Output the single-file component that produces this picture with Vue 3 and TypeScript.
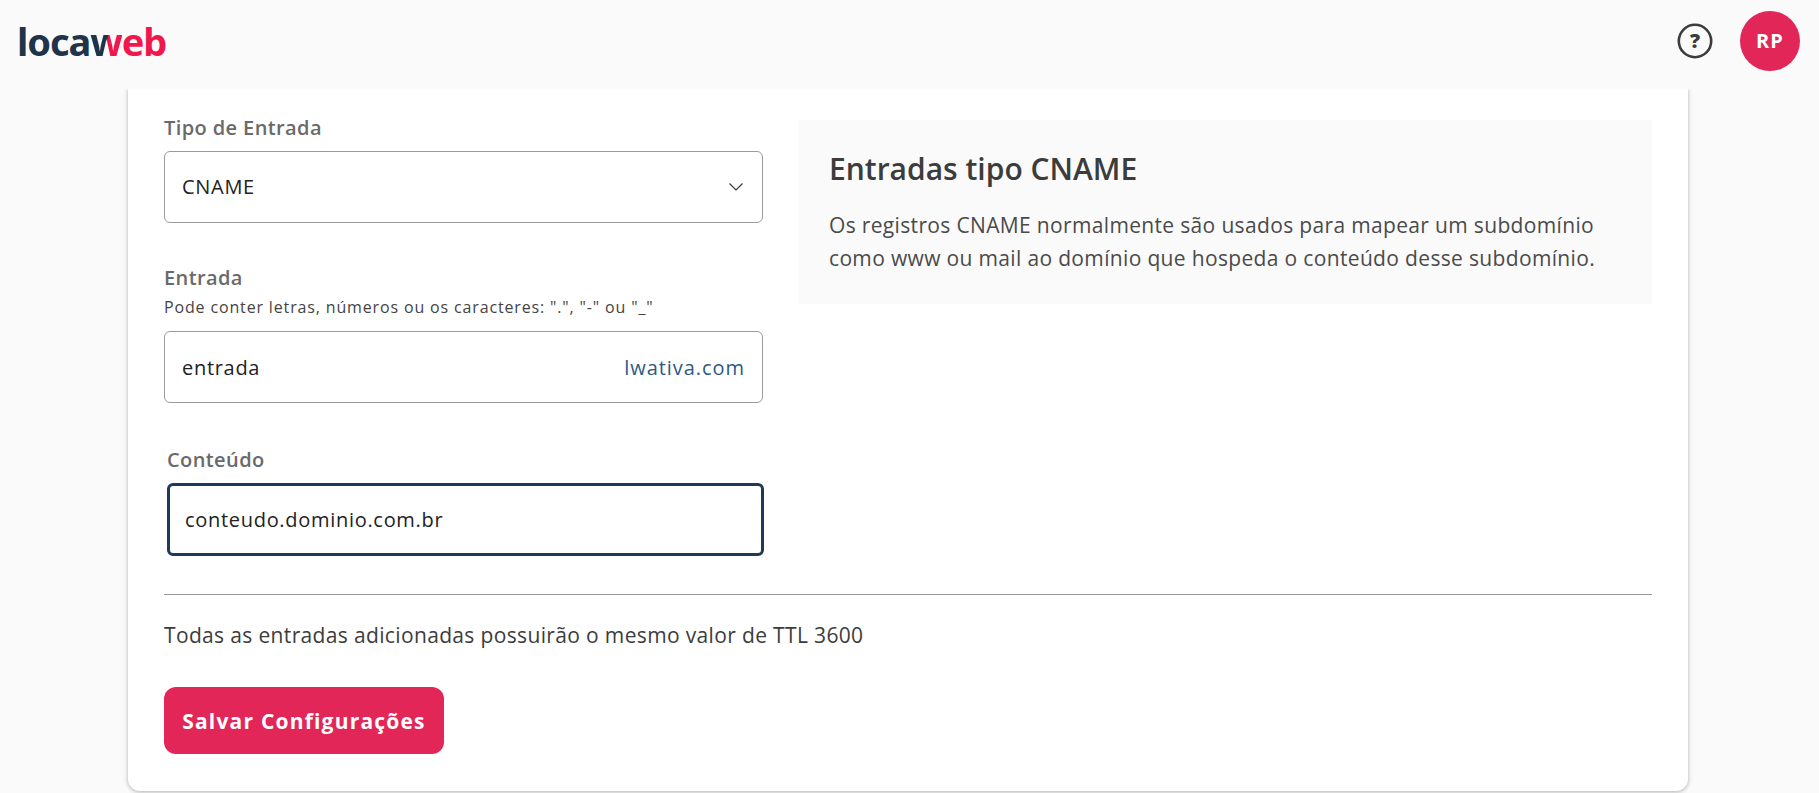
<script setup lang="ts">
import { ref } from 'vue';

const tipo = ref('CNAME');
const entrada = ref('entrada');
const conteudo = ref('conteudo.dominio.com.br');
const tipos = ['A', 'AAAA', 'CNAME', 'MX', 'TXT'];
</script>

<template>
  <div class="page">
    <header class="topbar">
      <div class="logo">loca<span class="logo-w">w</span><span class="logo-web">eb</span></div>
      <div class="topbar-right">
        <svg class="help" width="36" height="36" viewBox="0 0 36 36" fill="none">
          <circle cx="18" cy="18" r="16.2" stroke="#3c3c3c" stroke-width="2.6" />
          <text x="18" y="25" text-anchor="middle" class="help-mark">?</text>
        </svg>
        <div class="avatar">RP</div>
      </div>
    </header>

    <main class="card">
      <div class="columns">
        <div class="form-col">
          <div class="field">
            <label class="label">Tipo de Entrada</label>
            <div class="select-wrap">
              <select v-model="tipo" class="control select">
                <option v-for="t in tipos" :key="t" :value="t">{{ t }}</option>
              </select>
              <svg class="chevron" width="16" height="10" viewBox="0 0 16 10" fill="none">
                <path d="M1.5 1.5 L8 8 L14.5 1.5" stroke="#333" stroke-width="1.1" />
              </svg>
            </div>
          </div>

          <div class="field entry-field">
            <label class="label">Entrada</label>
            <p class="hint">Pode conter letras, números ou os caracteres: ".", "-" ou "_"</p>
            <div class="control entry-box">
              <input v-model="entrada" class="bare-input" type="text" />
              <span class="domain">lwativa.com</span>
            </div>
          </div>

          <div class="field content-field">
            <label class="label">Conteúdo</label>
            <input v-model="conteudo" class="control focused" type="text" />
          </div>
        </div>

        <aside class="info">
          <h2>Entradas tipo CNAME</h2>
          <p>Os registros CNAME normalmente são usados para mapear um subdomínio como www ou mail ao domínio que hospeda o conteúdo desse subdomínio.</p>
        </aside>
      </div>

      <hr class="divider" />
      <p class="ttl">Todas as entradas adicionadas possuirão o mesmo valor de TTL 3600</p>
      <button class="save" type="button">Salvar Configurações</button>
    </main>
  </div>
</template>

<style scoped>
.page {
  height: 793px;
  overflow: hidden;
  background: #fafafa;
  font-family: "Open Sans", "Noto Sans", sans-serif;
  color: #3c3c3c;
}

.topbar {
  position: relative;
  z-index: 1;
  height: 89px;
  display: flex;
  justify-content: space-between;
  align-items: center;
  padding: 0 19px 8px 17px;
  box-sizing: border-box;
  background: #fafafa;
}

.logo {
  font-family: "Noto Sans", sans-serif;
  font-weight: 700;
  font-size: 38px;
  letter-spacing: -1.05px;
  line-height: 1;
  color: #1f3349;
}

.logo-web {
  color: #f0174c;
}

.logo-w {
  background: linear-gradient(100deg, #1f3349 52%, #f0174c 53%);
  -webkit-background-clip: text;
  background-clip: text;
  color: transparent;
}

.topbar-right {
  display: flex;
  align-items: center;
  gap: 27px;
}

.help-mark {
  font-family: "Open Sans", sans-serif;
  font-weight: 800;
  font-size: 20px;
  fill: #3c3c3c;
}

.avatar {
  width: 60px;
  height: 60px;
  border-radius: 50%;
  background: #e32658;
  color: #fff;
  font-weight: 700;
  font-size: 20px;
  letter-spacing: 1.2px;
  display: flex;
  align-items: center;
  justify-content: center;
}

.card {
  width: 1560px;
  height: 702px;
  margin-left: 128px;
  padding: 27px 36px 0;
  box-sizing: border-box;
  background: #fff;
  border-radius: 0 0 12px 12px;
  box-shadow: 0 1px 4px rgba(0, 0, 0, 0.3);
}

.columns {
  display: flex;
  gap: 36px;
  align-items: flex-start;
}

.form-col {
  width: 599px;
  flex-shrink: 0;
}

.label {
  display: block;
  font-size: 20px;
  line-height: 24px;
  font-weight: 600;
  letter-spacing: 0.4px;
  color: #6a6a6a;
  margin-bottom: 11px;
}

.control {
  display: block;
  width: 100%;
  height: 72px;
  box-sizing: border-box;
  border: 1px solid #9a9a9a;
  border-radius: 6px;
  background: #fff;
  padding: 0 17px;
  font-family: inherit;
  font-size: 20px;
  letter-spacing: 0.7px;
  color: #222;
  outline: none;
}

.select-wrap {
  position: relative;
}

.select {
  appearance: none;
  padding-bottom: 2px;
}

.chevron {
  position: absolute;
  right: 19px;
  top: 31px;
  pointer-events: none;
}

.entry-field {
  margin-top: 43px;
}

.entry-field .label {
  margin-bottom: 7px;
}

.hint {
  margin: 0 0 14px;
  font-size: 16px;
  line-height: 20px;
  letter-spacing: 0.85px;
  color: #444;
}

.entry-box {
  display: flex;
  align-items: center;
  justify-content: space-between;
}

.bare-input {
  border: 0;
  outline: none;
  padding: 0;
  flex: 1;
  min-width: 0;
  font: inherit;
  letter-spacing: inherit;
  color: #222;
}

.domain {
  color: #2c5a85;
  letter-spacing: 0.95px;
}

.content-field {
  margin: 45px -1px 0 3px;
}

.focused {
  height: 73px;
  padding: 0 15px;
  border: 3px solid #1e3a56;
}

.info {
  flex: 1;
  height: 184px;
  margin-top: 4px;
  padding: 32px 30px;
  box-sizing: border-box;
  background: #fafafa;
}

.info h2 {
  margin: 0 0 23px;
  font-size: 30px;
  line-height: 34px;
  font-weight: 600;
  color: #3c3c3c;
}

.info p {
  margin: 0;
  font-size: 21px;
  line-height: 33px;
  letter-spacing: 0.34px;
  color: #4a4a4a;
}

.divider {
  margin: 38px 0 0;
  border: 0;
  border-top: 1px solid #9a9a9a;
}

.ttl {
  margin: 26px 0 0;
  font-size: 21px;
  line-height: 28px;
  letter-spacing: 0.35px;
  color: #3c3c3c;
}

.save {
  display: block;
  margin-top: 38px;
  width: 280px;
  height: 67px;
  border: 0;
  border-radius: 12px;
  background: #e32658;
  color: #fff;
  font-family: inherit;
  font-size: 21px;
  font-weight: 700;
  letter-spacing: 1.2px;
}
</style>

<style>
body {
  background: #fafafa;
}
</style>
